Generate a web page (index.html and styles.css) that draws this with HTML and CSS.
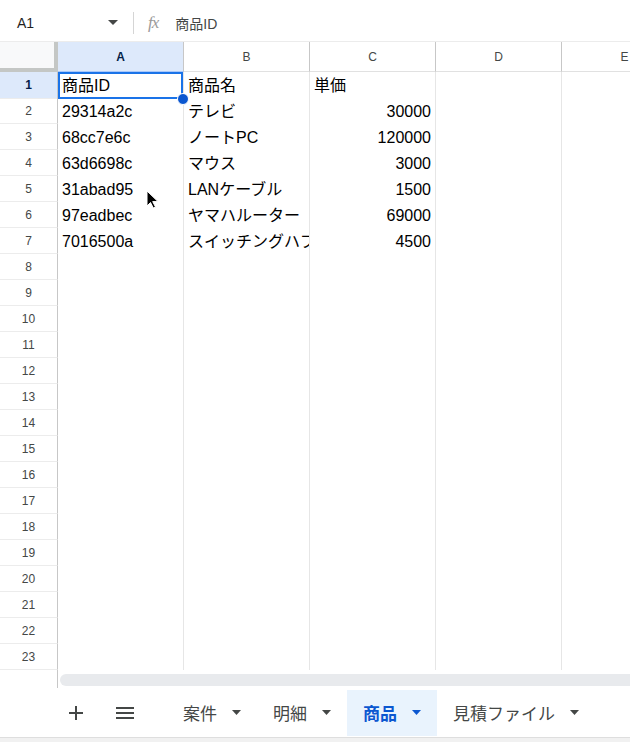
FILE: index.html
```html
<!DOCTYPE html>
<html lang="ja">
<head>
    <meta charset="UTF-8">
    <title>見積</title>
    <link rel="stylesheet" href="styles.css">
</head>
<body>
<div class="sheet">
    <div class="formula-bar">
        <div class="name-box">
            <span>A1</span>
            <svg class="caret" width="10" height="5" viewBox="0 0 10 5"><path d="M0 0h10L5 5z"/></svg>
        </div>
        <div class="divider"></div>
        <span class="fx">fx</span>
        <span class="formula">商品ID</span>
    </div>

    <div class="grid">
        <div class="row head">
            <div class="corner"></div>
            <div class="col-head sel">A</div>
            <div class="col-head">B</div>
            <div class="col-head">C</div>
            <div class="col-head">D</div>
            <div class="col-head">E</div>
        </div>
        <div class="row">
            <div class="row-head sel">1</div>
            <div class="cell active">商品ID</div>
            <div class="cell">商品名</div>
            <div class="cell">単価</div>
            <div class="cell"></div><div class="cell"></div>
        </div>
        <div class="row">
            <div class="row-head">2</div>
            <div class="cell">29314a2c</div><div class="cell">テレビ</div><div class="cell num">30000</div>
            <div class="cell"></div><div class="cell"></div>
        </div>
        <div class="row">
            <div class="row-head">3</div>
            <div class="cell">68cc7e6c</div><div class="cell">ノートPC</div><div class="cell num">120000</div>
            <div class="cell"></div><div class="cell"></div>
        </div>
        <div class="row">
            <div class="row-head">4</div>
            <div class="cell">63d6698c</div><div class="cell">マウス</div><div class="cell num">3000</div>
            <div class="cell"></div><div class="cell"></div>
        </div>
        <div class="row">
            <div class="row-head">5</div>
            <div class="cell">31abad95</div><div class="cell">LANケーブル</div><div class="cell num">1500</div>
            <div class="cell"></div><div class="cell"></div>
        </div>
        <div class="row">
            <div class="row-head">6</div>
            <div class="cell">97eadbec</div><div class="cell">ヤマハルーター</div><div class="cell num">69000</div>
            <div class="cell"></div><div class="cell"></div>
        </div>
        <div class="row">
            <div class="row-head">7</div>
            <div class="cell">7016500a</div><div class="cell">スイッチングハブ</div><div class="cell num">4500</div>
            <div class="cell"></div><div class="cell"></div>
        </div>
        <div class="row"><div class="row-head">8</div><div class="cell"></div><div class="cell"></div><div class="cell"></div><div class="cell"></div><div class="cell"></div></div>
        <div class="row"><div class="row-head">9</div><div class="cell"></div><div class="cell"></div><div class="cell"></div><div class="cell"></div><div class="cell"></div></div>
        <div class="row"><div class="row-head">10</div><div class="cell"></div><div class="cell"></div><div class="cell"></div><div class="cell"></div><div class="cell"></div></div>
        <div class="row"><div class="row-head">11</div><div class="cell"></div><div class="cell"></div><div class="cell"></div><div class="cell"></div><div class="cell"></div></div>
        <div class="row"><div class="row-head">12</div><div class="cell"></div><div class="cell"></div><div class="cell"></div><div class="cell"></div><div class="cell"></div></div>
        <div class="row"><div class="row-head">13</div><div class="cell"></div><div class="cell"></div><div class="cell"></div><div class="cell"></div><div class="cell"></div></div>
        <div class="row"><div class="row-head">14</div><div class="cell"></div><div class="cell"></div><div class="cell"></div><div class="cell"></div><div class="cell"></div></div>
        <div class="row"><div class="row-head">15</div><div class="cell"></div><div class="cell"></div><div class="cell"></div><div class="cell"></div><div class="cell"></div></div>
        <div class="row"><div class="row-head">16</div><div class="cell"></div><div class="cell"></div><div class="cell"></div><div class="cell"></div><div class="cell"></div></div>
        <div class="row"><div class="row-head">17</div><div class="cell"></div><div class="cell"></div><div class="cell"></div><div class="cell"></div><div class="cell"></div></div>
        <div class="row"><div class="row-head">18</div><div class="cell"></div><div class="cell"></div><div class="cell"></div><div class="cell"></div><div class="cell"></div></div>
        <div class="row"><div class="row-head">19</div><div class="cell"></div><div class="cell"></div><div class="cell"></div><div class="cell"></div><div class="cell"></div></div>
        <div class="row"><div class="row-head">20</div><div class="cell"></div><div class="cell"></div><div class="cell"></div><div class="cell"></div><div class="cell"></div></div>
        <div class="row"><div class="row-head">21</div><div class="cell"></div><div class="cell"></div><div class="cell"></div><div class="cell"></div><div class="cell"></div></div>
        <div class="row"><div class="row-head">22</div><div class="cell"></div><div class="cell"></div><div class="cell"></div><div class="cell"></div><div class="cell"></div></div>
        <div class="row"><div class="row-head">23</div><div class="cell"></div><div class="cell"></div><div class="cell"></div><div class="cell"></div><div class="cell"></div></div>
    </div>

    <div class="scroll-row">
        <div class="scroll-gap"></div>
        <div class="scrollbar"></div>
    </div>

    <div class="tabs">
        <button class="tool">
            <svg width="16" height="16" viewBox="0 0 16 16"><path d="M8 1v14M1 8h14" stroke="#444746" stroke-width="2"/></svg>
        </button>
        <button class="tool">
            <svg width="18" height="14" viewBox="0 0 18 14"><path d="M0 2h18M0 7h18M0 12h18" stroke="#444746" stroke-width="2"/></svg>
        </button>
        <div class="tab">案件<svg class="tri" width="9" height="5" viewBox="0 0 9 5"><path d="M0 0h9L4.5 5z"/></svg></div>
        <div class="tab">明細<svg class="tri" width="9" height="5" viewBox="0 0 9 5"><path d="M0 0h9L4.5 5z"/></svg></div>
        <div class="tab current">商品<svg class="tri" width="9" height="5" viewBox="0 0 9 5"><path d="M0 0h9L4.5 5z"/></svg></div>
        <div class="tab">見積ファイル<svg class="tri" width="9" height="5" viewBox="0 0 9 5"><path d="M0 0h9L4.5 5z"/></svg></div>
    </div>
    <div class="status"></div>

    <svg class="pointer" width="13" height="19" viewBox="0 0 13 19">
        <path d="M1 1v15l3.5-3.5 2.8 5.5 2.2-1-2.8-5.4H12z" fill="#000" stroke="#fff" stroke-width="1"/>
    </svg>
</div>
</body>
</html>
```

FILE: styles.css
```css
* {
    box-sizing: border-box;
}

body {
    margin: 0;
    background: #fff;
    font-family: "Liberation Sans", "Noto Sans CJK JP", sans-serif;
    color: #1f1f1f;
}

.sheet {
    position: relative;
    width: 630px;
    height: 742px;
    overflow: hidden;
}

/* formula bar */
.formula-bar {
    display: flex;
    align-items: center;
    height: 42px;
    padding-top: 4px;
    border-bottom: 1px solid #ececec;
    font-size: 14px;
}

.name-box {
    display: flex;
    align-items: center;
    justify-content: space-between;
    width: 118px;
    padding-left: 17px;
}

.caret {
    fill: #444746;
}

.divider {
    width: 1px;
    height: 22px;
    margin-left: 15px;
    background: #d5d5d5;
}

.fx {
    margin-left: 14px;
    font-family: "Liberation Serif", serif;
    font-style: italic;
    font-size: 17px;
    color: #9a9a9a;
    letter-spacing: -1px;
}

.formula {
    margin-left: 17px;
    color: #444746;
}

/* grid */
.grid {
    width: 688px;
}

.row {
    display: grid;
    grid-template-columns: 58px repeat(5, 126px);
    height: 26px;
}

.row.head {
    height: 30px;
}

.corner {
    background: #f8f9fa;
    border-right: 4px solid #c4c7c5;
    border-bottom: 4px solid #c4c7c5;
}

.col-head {
    display: flex;
    align-items: center;
    justify-content: center;
    border-right: 1px solid #c7c7c7;
    border-bottom: 1px solid #e1e1e1;
    font-size: 12px;
    color: #444746;
}

.col-head.sel,
.row-head.sel {
    background: #dde9fb;
    color: #041e49;
    font-weight: 700;
}

.col-head.sel {
    border-bottom-color: #a8c7fa;
}

.row-head {
    display: flex;
    align-items: center;
    justify-content: center;
    border-right: 1px solid #c7c7c7;
    border-bottom: 1px solid #ececec;
    font-size: 12px;
    color: #444746;
}

.cell {
    position: relative;
    padding: 1px 4px 0;
    border-right: 1px solid #e6e6e6;
    font-size: 16px;
    line-height: 26px;
    white-space: nowrap;
    overflow: hidden;
    color: #000;
}

.cell.num {
    text-align: right;
}

.cell.active {
    overflow: visible;
    box-shadow: inset 0 0 0 2px #1a73e8;
}

.cell.active::after {
    content: "";
    position: absolute;
    right: -6px;
    bottom: -6px;
    width: 10px;
    height: 10px;
    border-radius: 50%;
    background: #0b57d0;
    border: 1px solid #fff;
    z-index: 2;
}

/* horizontal scroll */
.scroll-row {
    display: flex;
    height: 18px;
}

.scroll-gap {
    width: 58px;
    border-right: 1px solid #c7c7c7;
}

.scrollbar {
    flex: 1;
    height: 12px;
    margin: 4px 0 0 2px;
    border-radius: 6px 0 0 6px;
    background: #e8eaed;
}

/* sheet tabs */
.tabs {
    display: flex;
    align-items: center;
    height: 49px;
    padding-left: 56px;
}

.tool {
    display: flex;
    align-items: center;
    justify-content: center;
    width: 40px;
    height: 40px;
    padding: 0;
    border: none;
    background: none;
}

.tool + .tool {
    margin-left: 9px;
    margin-right: 22px;
}

.tab {
    display: flex;
    align-items: center;
    gap: 15px;
    height: 46px;
    padding: 0 16px;
    font-size: 17px;
    color: #444746;
}

.tri {
    fill: #444746;
}

.tab.current {
    background: #e9f3fd;
    color: #0b57d0;
    font-weight: 700;
}

.tab.current .tri {
    fill: #0b57d0;
}

.status {
    height: 5px;
    background: #f1f1f1;
    border-top: 1px solid #dedede;
}

.pointer {
    position: absolute;
    left: 146px;
    top: 190px;
}
```
